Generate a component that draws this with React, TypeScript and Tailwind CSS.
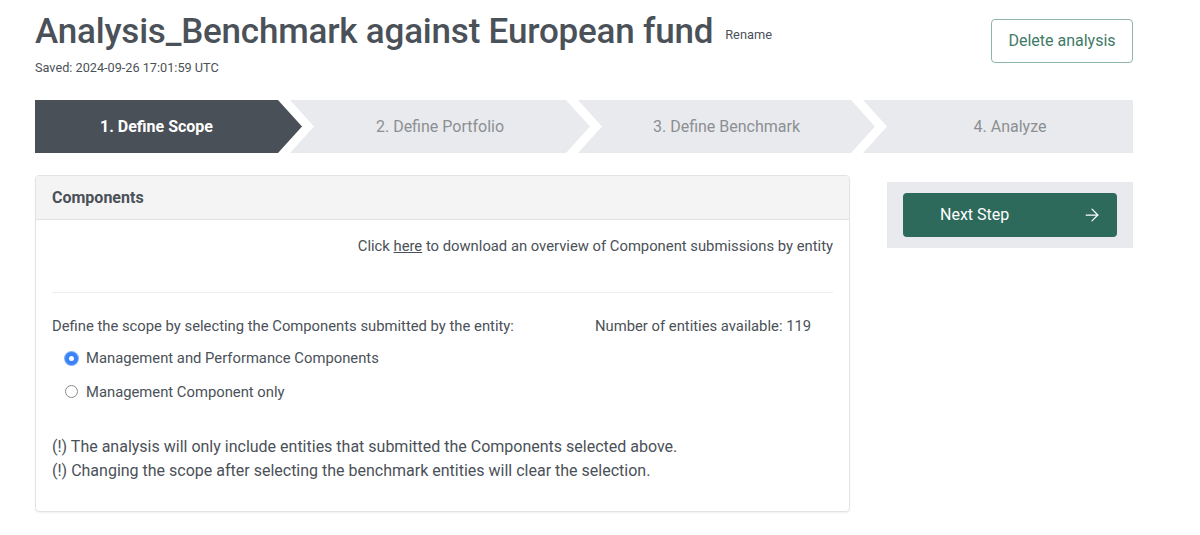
import { ArrowRight } from 'lucide-react';

type Step = {
  label: string;
  active?: boolean;
  width: string;
  shape: string;
  pad: string;
};

const steps: Step[] = [
  {
    label: '1. Define Scope',
    active: true,
    width: 'w-[267px]',
    shape: '[clip-path:polygon(0_0,calc(100%-24px)_0,100%_50%,calc(100%-24px)_100%,0_100%)]',
    pad: 'pr-[24px]',
  },
  {
    label: '2. Define Portfolio',
    width: 'w-[300px] -ml-[12px]',
    shape: '[clip-path:polygon(0_0,calc(100%-24px)_0,100%_50%,calc(100%-24px)_100%,0_100%,24px_50%)]',
    pad: 'px-[24px]',
  },
  {
    label: '3. Define Benchmark',
    width: 'w-[297px] -ml-[12px]',
    shape: '[clip-path:polygon(0_0,calc(100%-24px)_0,100%_50%,calc(100%-24px)_100%,0_100%,24px_50%)]',
    pad: 'px-[24px]',
  },
  {
    label: '4. Analyze',
    width: 'flex-1 -ml-[12px]',
    shape: '[clip-path:polygon(0_0,100%_0,100%_100%,0_100%,24px_50%)]',
    pad: 'pl-[24px]',
  },
];

const Stepper = () => (
  <div className="flex h-[53px]">
    {steps.map((step) => (
      <div
        key={step.label}
        className={`flex h-full items-center justify-center text-base ${step.width} ${step.shape} ${step.pad} ${
          step.active ? 'bg-[#4a5057] font-bold text-white' : 'bg-[#e9eaed] text-[#8c8f93]'
        }`}
      >
        {step.label}
      </div>
    ))}
  </div>
);

const Radio = ({ checked, label }: { checked?: boolean; label: string }) => (
  <label className="flex items-center gap-[8px]">
    {checked ? (
      <span className="flex h-[13px] w-[13px] items-center justify-center rounded-full bg-[#3b82f6] ring-1 ring-[#7fb0f8]">
        <span className="h-[5px] w-[5px] rounded-full bg-white" />
      </span>
    ) : (
      <span className="h-[13px] w-[13px] rounded-full border border-[#8a8a8a] bg-white" />
    )}
    <span>{label}</span>
  </label>
);

export default function App() {
  return (
    <div className="min-h-[535px] bg-white pl-[35px] pt-[14px] font-['Roboto',sans-serif] text-[#4b5158] antialiased">
      <div className="w-[1098px]">
        <header className="flex items-start justify-between">
          <div>
            <div className="flex items-baseline gap-[12px]">
              <h1 className="text-[35px] font-medium leading-[36px] tracking-[-0.2px]">
                Analysis_Benchmark against European fund
              </h1>
              <button type="button" className="-translate-y-[4px] text-[12.8px]">
                Rename
              </button>
            </div>
            <p className="mt-[8px] text-[12.7px]">Saved: 2024-09-26 17:01:59 UTC</p>
          </div>
          <button
            type="button"
            className="mt-[5px] h-[44px] w-[142px] rounded border border-[#8fb5a8] text-base text-[#3f7a68]"
          >
            Delete analysis
          </button>
        </header>

        <nav className="mt-[23px]">
          <Stepper />
        </nav>

        <main className="mt-[22px] flex items-start gap-[37px]">
          <section className="w-[815px] overflow-hidden rounded border border-[#e3e3e3] shadow-[0_1px_2px_rgba(0,0,0,0.06)]">
            <div className="flex h-[44px] items-center border-b border-[#e3e3e3] bg-[#f4f4f4] px-[16px] text-base font-bold">
              Components
            </div>
            <div className="px-[16px] pb-[28px] text-[14.8px]">
              <p className="pt-[15px] text-right">
                Click <a className="underline">here</a> to download an overview of Component submissions by entity
              </p>
              <div className="mt-[35px] border-t border-[#eeeeee]" />
              <div className="mt-[22px] flex">
                <span className="w-[543px]">Define the scope by selecting the Components submitted by the entity:</span>
                <span>Number of entities available: 119</span>
              </div>
              <div className="mt-[10px] flex flex-col gap-[11px] pl-[13px]">
                <Radio checked label="Management and Performance Components" />
                <Radio label="Management Component only" />
              </div>
              <div className="mt-[32px] text-base leading-[24px]">
                <p>(!) The analysis will only include entities that submitted the Components selected above.</p>
                <p>(!) Changing the scope after selecting the benchmark entities will clear the selection.</p>
              </div>
            </div>
          </section>

          <aside className="mt-[7px] w-[246px] bg-[#e9eaed] px-[16px] py-[11px]">
            <button
              type="button"
              className="flex h-[44px] w-full items-center justify-between rounded bg-[#2d6a5c] pl-[37px] pr-[15px] text-base text-white"
            >
              <span>Next Step</span>
              <ArrowRight size={20} strokeWidth={1.5} aria-hidden="true" />
            </button>
          </aside>
        </main>
      </div>
    </div>
  );
}
